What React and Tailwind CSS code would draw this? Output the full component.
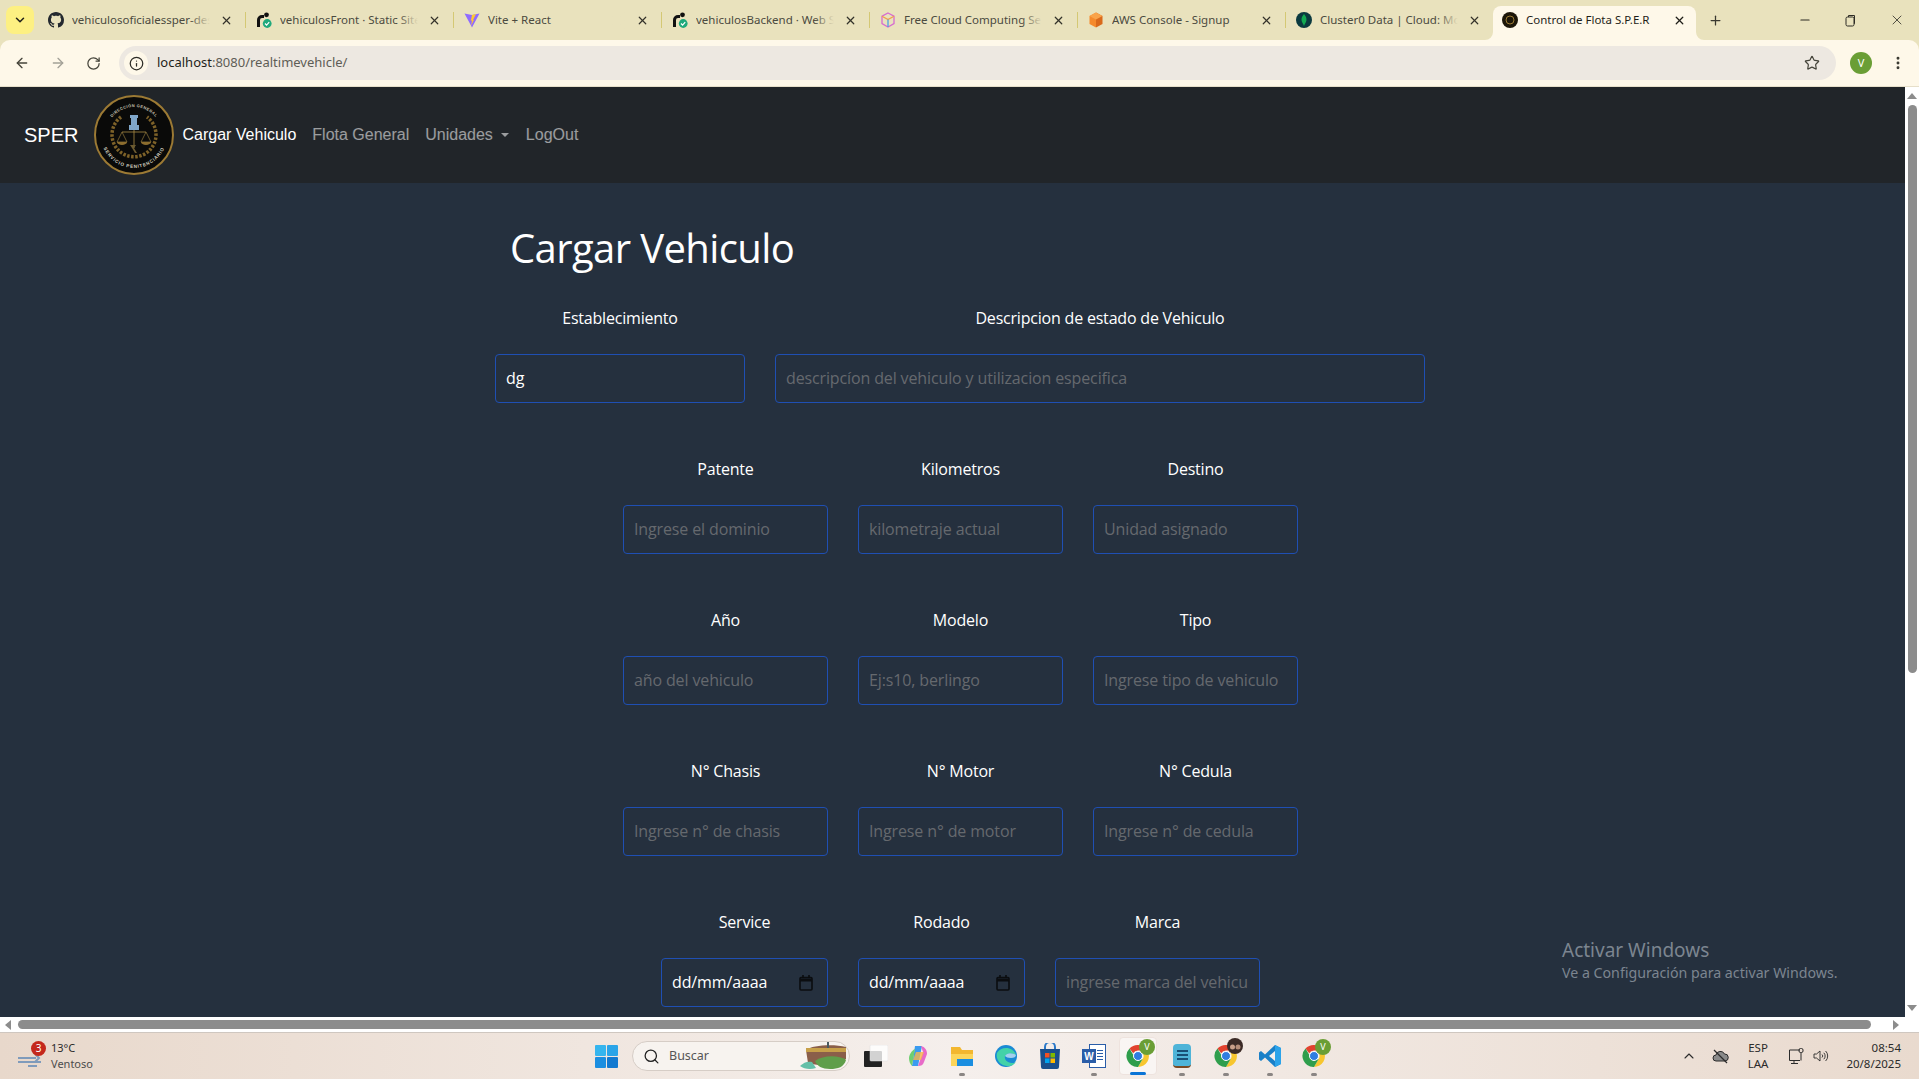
import { ArrowLeft, ArrowRight, RotateCw, Info, Star, EllipsisVertical, ChevronDown, X, Plus, Minus, Search, ChevronUp } from 'lucide-react';

const tabs = [
  { title: 'vehiculosoficialessper-des', icon: 'github' },
  { title: 'vehiculosFront · Static Site', icon: 'render' },
  { title: 'Vite + React', icon: 'vite' },
  { title: 'vehiculosBackend · Web Se', icon: 'render' },
  { title: 'Free Cloud Computing Se', icon: 'cube' },
  { title: 'AWS Console - Signup', icon: 'aws' },
  { title: 'Cluster0 Data | Cloud: Mo', icon: 'mongo' },
];

function Favicon({ type }) {
  if (type === 'github') {
    return (
      <svg width="16" height="16" viewBox="0 0 16 16" fill="#24292f">
        <path d="M8 0C3.58 0 0 3.58 0 8c0 3.54 2.29 6.53 5.47 7.59.4.07.55-.17.55-.38 0-.19-.01-.82-.01-1.49-2.01.37-2.53-.49-2.69-.94-.09-.23-.48-.94-.82-1.13-.28-.15-.68-.52-.01-.53.63-.01 1.08.58 1.23.82.72 1.21 1.87.87 2.33.66.07-.52.28-.87.51-1.07-1.78-.2-3.64-.89-3.64-3.95 0-.87.31-1.59.82-2.15-.08-.2-.36-1.02.08-2.12 0 0 .67-.21 2.2.82.64-.18 1.32-.27 2-.27s1.36.09 2 .27c1.53-1.04 2.2-.82 2.2-.82.44 1.1.16 1.92.08 2.12.51.56.82 1.27.82 2.15 0 3.07-1.87 3.75-3.65 3.95.29.25.54.73.54 1.48 0 1.07-.01 1.93-.01 2.2 0 .21.15.46.55.38A8.01 8.01 0 0 0 16 8c0-4.42-3.58-8-8-8z" />
      </svg>
    );
  }
  if (type === 'render') {
    return (
      <svg width="16" height="16" viewBox="0 0 16 16">
        <path d="M1 15V8a5 5 0 0 1 5-5h2v3H6a2 2 0 0 0-2 2v7z" fill="#111" />
        <circle cx="10.5" cy="2.8" r="2.4" fill="#111" />
        <circle cx="11.2" cy="11.5" r="4.4" fill="#1fa97c" />
        <path d="M9 11.5l1.6 1.6 2.6-3" fill="none" stroke="#fff" strokeWidth="1.2" />
      </svg>
    );
  }
  if (type === 'vite') {
    return (
      <svg width="16" height="16" viewBox="0 0 16 16">
        <path d="M0.5 1.5L8 3l7.5-1.5L8 15.5z" fill="#8f6bff" />
        <path d="M8 3l4-1-3 6 1-.3L7 14l1-5.5-1.2.3z" fill="#ffc82e" />
      </svg>
    );
  }
  if (type === 'cube') {
    return (
      <svg width="16" height="16" viewBox="0 0 16 16" fill="none" strokeWidth="1.3">
        <path d="M8 1l6 3.2v7.4L8 15l-6-3.4V4.2z" stroke="#d66bd0" />
        <path d="M2 4.2L8 7.6l6-3.4" stroke="#f0a04b" />
        <path d="M8 7.6V15" stroke="#4aa3e0" />
      </svg>
    );
  }
  if (type === 'aws') {
    return (
      <svg width="16" height="16" viewBox="0 0 16 16">
        <path d="M8 0.5l6.5 3.5v8L8 15.5z" fill="#d9691b" />
        <path d="M8 0.5L1.5 4v8L8 15.5z" fill="#f58a2c" />
        <path d="M8 0.5l6.5 3.5L8 7.5 1.5 4z" fill="#f9a34a" />
      </svg>
    );
  }
  if (type === 'mongo') {
    return (
      <svg width="16" height="16" viewBox="0 0 16 16">
        <circle cx="8" cy="8" r="8" fill="#0b3a3f" />
        <path d="M8 2c2 2.4 2.8 4.4 2.4 6.4C10.1 10 9 11.3 8 14c-1-2.7-2.1-4-2.4-5.6C5.2 6.4 6 4.4 8 2z" fill="#13aa52" />
      </svg>
    );
  }
  return null;
}

function Tab({ title, icon, last }) {
  return (
    <div className="w-[208px] h-[28px] flex items-center pl-[10px] relative">
      <div className="w-4 h-4 shrink-0 mr-[8px]"><Favicon type={icon} /></div>
      <div className="flex-1 overflow-hidden whitespace-nowrap text-[11.5px] text-[#4b4a3f] relative">
        {title}
        <div className="absolute right-0 top-0 bottom-0 w-5 bg-gradient-to-r from-transparent to-[#e9e2bd]" />
      </div>
      <X size={13} strokeWidth={2.2} className="text-[#33322a] ml-[10px] mr-[13px] shrink-0" />
      {!last && <div className="absolute right-0 top-[6px] w-px h-4 bg-[#d4c874]" />}
    </div>
  );
}

function BrowserBar() {
  return (
    <div className="shrink-0 font-['Noto_Sans',sans-serif] bg-[#e9e2bd]">
      <div className="h-10 flex">
        <div className="w-[28px] h-[28px] mt-[6px] ml-[6px] mr-[3px] rounded-lg bg-[#fdf082] flex items-center justify-center">
          <ChevronDown size={14} strokeWidth={2.6} className="text-[#22221c]" />
        </div>
        <div className="flex mt-[6px] h-[28px] ml-[1px]">
          {tabs.map((t, i) => <Tab key={t.title} {...t} last={i === tabs.length - 1} />)}
        </div>
        <div className="relative w-[203px] h-[34px] mt-[6px] bg-[#fef8e9] rounded-t-lg flex items-center pl-[9px] pr-[10px] pb-[6px] -ml-[1px]">
          <svg width="8" height="8" viewBox="0 0 8 8" className="absolute -left-[8px] bottom-0">
            <path d="M8 0v8H0a8 8 0 0 0 8-8z" fill="#fef8e9" />
          </svg>
          <svg width="8" height="8" viewBox="0 0 8 8" className="absolute -right-[8px] bottom-0">
            <path d="M0 0v8h8a8 8 0 0 1-8-8z" fill="#fef8e9" />
          </svg>
          <svg width="16" height="16" viewBox="0 0 16 16" className="shrink-0 mr-[8px]">
            <circle cx="8" cy="8" r="8" fill="#1c1608" />
            <circle cx="8" cy="8" r="4" fill="none" stroke="#9a7b35" strokeWidth="1" />
          </svg>
          <span className="flex-1 text-[11.5px] text-[#1f1e18] whitespace-nowrap overflow-hidden">Control de Flota S.P.E.R</span>
          <X size={13} strokeWidth={2.4} className="text-[#1f1e18] shrink-0" />
        </div>
        <div className="flex items-center ml-[12px]">
          <Plus size={15} strokeWidth={2} className="text-[#3a3930]" />
        </div>
        <div className="flex-1" />
        <div className="flex items-center text-[#2c2b24]">
          <Minus size={14} className="mr-[32px]" />
          <svg width="13" height="13" viewBox="0 0 13 13" fill="none" stroke="currentColor" strokeWidth="1" className="mr-[32px]">
            <rect x="2" y="3" width="8" height="9" rx="1.5" />
            <path d="M4.5 3V1.5h6V9.5H10" />
          </svg>
          <X size={16} strokeWidth={1.2} className="mr-[14px]" />
        </div>
      </div>
      <div className="h-[47px] bg-[#fef8e9] rounded-t-[10px] flex items-center pl-[14px] pr-[14px] border-b border-[#e6dfca]">
        <ArrowLeft size={16} strokeWidth={2} className="text-[#45443a] mr-[20px]" />
        <ArrowRight size={16} strokeWidth={2} className="text-[#a3a197] mr-[20px]" />
        <RotateCw size={15} strokeWidth={2} className="text-[#45443a] mr-[18px]" />
        <div className="flex-1 h-[34px] rounded-full bg-[#ede8e1] flex items-center pl-[5px] pr-[16px]">
          <div className="w-6 h-6 rounded-full bg-[#fef8e9] flex items-center justify-center mr-[9px]">
            <Info size={15} strokeWidth={2} className="text-[#2d2c26]" />
          </div>
          <span className="text-[13px] text-[#1f1f1a]">localhost<span className="text-[#5e5d56]">:8080/realtimevehicle/</span></span>
          <div className="flex-1" />
          <Star size={16} strokeWidth={1.8} className="text-[#45443a]" />
        </div>
        <div className="ml-[14px] w-[22px] h-[22px] rounded-full bg-[#6a9e35] text-white text-[11px] flex items-center justify-center">V</div>
        <EllipsisVertical size={16} strokeWidth={2.4} className="text-[#3a3930] ml-[18px] -mr-[1px]" />
      </div>
    </div>
  );
}

function Logo() {
  return (
    <svg width="80" height="80" viewBox="0 0 80 80" className="shrink-0">
      <defs>
        <path id="logoTop" d="M12 40a28 28 0 0 1 56 0" />
        <path id="logoBottom" d="M7 40a33 33 0 0 0 66 0" />
      </defs>
      <circle cx="40" cy="40" r="39" fill="#0a0a09" stroke="#9c7a34" strokeWidth="2" />
      <text fontSize="4" fill="#c9c4b2" fontFamily="Liberation Sans, sans-serif" fontWeight="700" letterSpacing="0.4">
        <textPath href="#logoTop" startOffset="50%" textAnchor="middle">DIRECCIÓN GENERAL</textPath>
      </text>
      <text fontSize="4.6" fill="#d8d4c4" fontFamily="Liberation Sans, sans-serif" fontWeight="700" letterSpacing="0.8">
        <textPath href="#logoBottom" startOffset="50%" textAnchor="middle">SERVICIO PENITENCIARIO</textPath>
      </text>
      <path d="M27 22A22 22 0 1 0 53 22" fill="none" stroke="#7d6128" strokeWidth="3.5" strokeDasharray="2.5 1.5" />
      <path d="M36 20h8v3h-1v7h2v5H35v-5h2v-7h-1z" fill="#7fa6c9" />
      <path d="M40 35v18M28 37h24" stroke="#a88a45" strokeWidth="0.8" />
      <path d="M28 37l-5 10h10zM52 37l-5 10h10z" fill="none" stroke="#a88a45" strokeWidth="0.6" />
      <path d="M23 47a5 3 0 0 0 10 0zM47 47a5 3 0 0 0 10 0z" fill="#8c6d2e" />
      <path d="M36 50h6l-2 3 3 5h-2l-3-5z" fill="#6b5a30" />
    </svg>
  );
}

function Navbar() {
  return (
    <nav className="h-[96px] bg-[#212529] flex items-center pl-[24px] font-['Liberation_Sans',sans-serif] text-base text-white/55 shrink-0">
      <span className="text-xl text-white mr-[16px]">SPER</span>
      <Logo />
      <span className="text-white ml-[8px]">Cargar Vehiculo</span>
      <span className="ml-4">Flota General</span>
      <span className="ml-4 flex items-center">
        Unidades
        <span className="ml-[8px] w-0 h-0 border-x-[4px] border-x-transparent border-t-[4px] border-t-white/55" />
      </span>
      <span className="ml-[17px]">LogOut</span>
    </nav>
  );
}

function Field({ label, placeholder, value, width = 'w-[205px]', date }) {
  return (
    <div className={`${width} flex flex-col items-center`}>
      <label className="h-[22px] leading-[22px] text-base font-medium text-white mb-[25px] tracking-[-0.2px]">{label}</label>
      <div className="w-full h-[49px] rounded border border-[#1f4fb3] flex items-center px-[10px] pb-[2px] text-base whitespace-nowrap tracking-[-0.13px]">
        {date ? (
          <>
            <span className="flex-1 text-white">dd/mm/aaaa</span>
            <svg width="14" height="16" viewBox="0 0 14 16" fill="none" stroke="#0b0d10" strokeWidth="1.6" className="mr-[4px] mt-[2px]">
              <rect x="1" y="2.5" width="12" height="12.5" rx="1" />
              <path d="M1 5h12" strokeWidth="3" />
              <path d="M4 0v3M10 0v3" />
            </svg>
          </>
        ) : value ? (
          <span className="text-white">{value}</span>
        ) : (
          <span className="block flex-1 min-w-0 overflow-hidden text-[#65696e]">{placeholder}</span>
        )}
      </div>
    </div>
  );
}

function Form() {
  return (
    <div className="w-[1921px] shrink-0 font-['Open_Sans',sans-serif]">
      <h1 className="text-[40px] leading-[48px] text-white ml-[510px] mt-[41px] mb-[35px] tracking-[-0.6px]">Cargar Vehiculo</h1>
      <div className="flex justify-center gap-[30px] pr-[1px]">
        <Field label="Establecimiento" value="dg" width="w-[250px]" />
        <Field label="Descripcion de estado de Vehiculo" placeholder="descripcíon del vehiculo y utilizacion especifica" width="w-[650px]" />
      </div>
      <div className="flex justify-center gap-[30px] mt-[55px]">
        <Field label="Patente" placeholder="Ingrese el dominio" />
        <Field label="Kilometros" placeholder="kilometraje actual" />
        <Field label="Destino" placeholder="Unidad asignado" />
      </div>
      <div className="flex justify-center gap-[30px] mt-[55px]">
        <Field label="Año" placeholder="año del vehiculo" />
        <Field label="Modelo" placeholder="Ej:s10, berlingo" />
        <Field label="Tipo" placeholder="Ingrese tipo de vehiculo" />
      </div>
      <div className="flex justify-center gap-[30px] mt-[55px]">
        <Field label="N° Chasis" placeholder="Ingrese n° de chasis" />
        <Field label="N° Motor" placeholder="Ingrese n° de motor" />
        <Field label="N° Cedula" placeholder="Ingrese n° de cedula" />
      </div>
      <div className="flex justify-center gap-[30px] mt-[55px]">
        <Field label="Service" date width="w-[167px]" />
        <Field label="Rodado" date width="w-[167px]" />
        <Field label="Marca" placeholder="ingrese marca del vehiculo" />
      </div>
    </div>
  );
}

function ChromeIcon({ badge }) {
  return (
    <div className="relative w-[24px] h-[24px]">
      <svg width="24" height="24" viewBox="0 0 24 24">
        <path d="M12 1a11 11 0 0 1 9.5 5.5H12a5.5 5.5 0 0 0-4.8 2.8L3.5 4.5A11 11 0 0 1 12 1z" fill="#e2432f" />
        <path d="M21.5 6.5A11 11 0 0 1 12 23l4.8-8.3A5.5 5.5 0 0 0 16.7 9z" fill="#f7c62f" />
        <path d="M12 23A11 11 0 0 1 3.5 4.5l4.7 8a5.5 5.5 0 0 0 8.6 2.2z" fill="#2f9e4c" />
        <circle cx="12" cy="12" r="4.5" fill="#2f7de1" stroke="#fff" strokeWidth="1" />
      </svg>
      {badge && <div className="absolute -top-[5px] -right-[5px] w-[16px] h-[16px] rounded-full bg-[#6a9e35] text-white text-[9px] flex items-center justify-center">V</div>}
    </div>
  );
}

function Dot() {
  return <div className="absolute bottom-[3px] left-1/2 -ml-[3px] w-[6px] h-[3px] rounded-full bg-[#8a8583]" />;
}

function Taskbar() {
  return (
    <div className="relative h-[47px] shrink-0 flex items-center font-['Noto_Sans',sans-serif] bg-gradient-to-r from-[#e8d8cb] via-[#f5efec] to-[#e9dace] border-t border-[#cfc7c0]">
      <div className="w-[595px] shrink-0 flex items-center pl-[18px]">
        <div className="relative w-[24px] h-[24px] mr-[7px]">
          <svg width="24" height="24" viewBox="0 0 24 24" fill="none" stroke="#7f9bbb" strokeWidth="2" className="mt-[3px]">
            <path d="M0 11h18M0 15h23M10 19h9M17 7l4 4-4 4" />
          </svg>
          <div className="absolute -top-[3px] left-[13px] w-[15px] h-[15px] rounded-full bg-[#c4281c] text-white text-[10px] flex items-center justify-center">3</div>
        </div>
        <div className="text-[11px] leading-[16px] text-[#2b2b2b] ml-[2px]">
          <div>13°C</div>
          <div className="text-[#4c4c4c]">Ventoso</div>
        </div>
      </div>
      <svg width="23" height="23" viewBox="0 0 23 23" className="shrink-0">
        <rect x="0" y="0" width="11" height="11" rx="1" fill="#35b5ee" />
        <rect x="12" y="0" width="11" height="11" rx="1" fill="#2aa4e8" />
        <rect x="0" y="12" width="11" height="11" rx="1" fill="#1b8ee0" />
        <rect x="12" y="12" width="11" height="11" rx="1" fill="#1279d0" />
      </svg>
      <div className="ml-[14px] w-[218px] h-[30px] rounded-full bg-[#f7f3ef] border border-[#d6cdc6] flex items-center pl-[10px] pr-[1px]">
        <Search size={17} strokeWidth={1.8} className="text-[#222]" />
        <span className="ml-[9px] text-[12.5px] text-[#555]">Buscar</span>
        <div className="flex-1" />
        <svg width="48" height="28" viewBox="0 0 48 28">
          <path d="M6 8c6-5 28-6 40-3v12c-6 6-26 8-38 4z" fill="#8a5f4a" />
          <path d="M6 6h40v4H6z" fill="#c7a04a" />
          <path d="M27 0h2v6h-2z" fill="#4a5a5f" />
          <path d="M0 24c4-4 8-5 12-4l4 6c-6 2-12 1-16-2z" fill="#63c0a8" />
          <path d="M15 19c8-6 24-6 31-1-2 7-8 9-16 9s-13-3-15-8z" fill="#5f9e4a" />
        </svg>
      </div>
      <div className="ml-[12px] flex items-center relative h-full">
        <div className="w-[27px] h-full flex items-center justify-center">
          <svg width="24" height="22" viewBox="0 0 24 22">
            <rect x="0" y="6" width="18" height="16" rx="1" fill="#222" />
            <rect x="6" y="0" width="18" height="16" rx="1" fill="#fff" fillOpacity="0.8" stroke="#ddd" strokeWidth="0.5" />
          </svg>
        </div>
        <div className="w-[44px] ml-[7px] h-full flex items-center justify-center">
          <svg width="24" height="24" viewBox="0 0 24 24">
            <path d="M9 2h7l-4 20H6z" fill="#3b9bf0" />
            <path d="M15 2c4 1 6 4 6 8l-3 8c-1 3-3 4-6 4l5-14z" fill="#e86bc8" />
            <path d="M3 14c0-3 3-8 6-9l-3 17c-2-2-3-5-3-8z" fill="#6fcf6f" />
            <path d="M10 8h8l-3 8H7z" fill="#f9b64a" opacity="0.8" />
          </svg>
        </div>
        <div className="w-[44px] h-full flex items-center justify-center relative">
          <svg width="22" height="24" viewBox="0 0 22 24">
            <path d="M0 3h9l2 3h11v16H0z" fill="#f3b72f" />
            <rect x="0" y="10" width="22" height="12" fill="#fcd55a" />
            <rect x="6" y="15" width="16" height="7" fill="#1b8ee0" />
          </svg>
          <Dot />
        </div>
        <div className="w-[44px] h-full flex items-center justify-center relative">
          <svg width="24" height="24" viewBox="0 0 24 24">
            <circle cx="12" cy="12" r="11" fill="#1a8ad4" />
            <path d="M3 9c4-7 16-7 19 2-3-2-9-3-11 1-1 3 2 7 7 7 1 0 3 0 4-1-4 6-13 5-17 0-2-3-3-6-2-9z" fill="#43d2a8" />
            <path d="M11 12c2-4 8-3 11-1 0 2-2 3-5 3s-5-1-6-2z" fill="#fff" opacity="0.6" />
          </svg>
        </div>
        <div className="w-[44px] h-full flex items-center justify-center relative">
          <svg width="22" height="26" viewBox="0 0 22 26">
            <path d="M6 6V4a5 5 0 0 1 10 0v2" fill="none" stroke="#2a78c8" strokeWidth="2" />
            <path d="M1 6h20l-1 18a2 2 0 0 1-2 2H4a2 2 0 0 1-2-2z" fill="#1a4f8c" />
            <rect x="6" y="10" width="4.5" height="4.5" fill="#f25022" />
            <rect x="11.5" y="10" width="4.5" height="4.5" fill="#7fba00" />
            <rect x="6" y="15.5" width="4.5" height="4.5" fill="#00a4ef" />
            <rect x="11.5" y="15.5" width="4.5" height="4.5" fill="#ffb900" />
          </svg>
        </div>
        <div className="w-[44px] h-full flex items-center justify-center relative">
          <div className="relative w-[24px] h-[24px]">
            <div className="absolute right-0 top-0 w-[17px] h-[24px] bg-white border border-[#2a5da8] flex flex-col gap-[2px] items-end pt-[5px] pr-[2px]">
              <div className="w-[6px] h-px bg-[#2a5da8]" />
              <div className="w-[6px] h-px bg-[#2a5da8]" />
              <div className="w-[6px] h-px bg-[#2a5da8]" />
              <div className="w-[6px] h-px bg-[#2a5da8]" />
            </div>
            <div className="absolute left-0 top-[5px] w-[14px] h-[14px] bg-[#2a5da8] text-white text-[10px] font-bold flex items-center justify-center font-['Liberation_Sans',sans-serif]">W</div>
          </div>
          <Dot />
        </div>
        <div className="w-[44px] h-full flex items-center justify-center relative">
          <div className="absolute left-[3px] top-[4px] w-[38px] h-[38px] rounded bg-white/50 border border-[#eee3de]" />
          <ChromeIcon badge />
          <div className="absolute bottom-[4px] left-1/2 -ml-[8px] w-[16px] h-[3px] rounded-full bg-[#0a74d6]" />
        </div>
        <div className="w-[44px] h-full flex items-center justify-center relative">
          <div className="w-[18px] h-[24px] rounded-sm bg-[#4fb4d8] flex flex-col justify-center items-center gap-[2px] border-b-2 border-[#7a4a24]">
            <div className="w-[11px] h-[2px] bg-[#184f75]" />
            <div className="w-[11px] h-[2px] bg-[#184f75]" />
            <div className="w-[11px] h-[2px] bg-[#184f75]" />
          </div>
          <Dot />
        </div>
        <div className="w-[44px] h-full flex items-center justify-center relative">
          <ChromeIcon />
          <svg width="16" height="16" viewBox="0 0 16 16" className="absolute top-[5px] left-[23px]">
            <circle cx="8" cy="8" r="8" fill="#3a2a26" />
            <circle cx="5.5" cy="9" r="2.5" fill="#c9a08a" />
            <circle cx="11" cy="9" r="2.5" fill="#b58d78" />
          </svg>
          <Dot />
        </div>
        <div className="w-[44px] h-full flex items-center justify-center relative">
          <svg width="24" height="24" viewBox="0 0 24 24">
            <path d="M17 1l6 3v16l-6 3-10-9.5L3 17l-2-1.5V8.5L3 7l4 3.5z" fill="#1a80c8" />
            <path d="M17 1l6 3v16l-6 3z" fill="#2ba3ea" />
            <path d="M17 7l-6 5 6 5z" fill="#f5efec" />
          </svg>
          <Dot />
        </div>
        <div className="w-[44px] h-full flex items-center justify-center relative">
          <ChromeIcon badge />
          <Dot />
        </div>
      </div>
      <div className="flex-1" />
      <div className="flex items-center text-[#2b2b2b] text-[11.5px] pr-[18px]">
        <ChevronUp size={16} strokeWidth={1.6} className="mr-[15px]" />
        <svg width="17" height="17" viewBox="0 0 17 17" className="mr-[19px]">
          <path d="M4 13a3 3 0 0 1 0-6 4.5 4.5 0 0 1 8.5-1A3.5 3.5 0 0 1 13 13z" fill="#8a8a8a" stroke="#2b2b2b" strokeWidth="1" />
          <path d="M2 2l13 13" stroke="#2b2b2b" strokeWidth="1.3" />
        </svg>
        <div className="text-center leading-[16px] mr-[20px]">
          <div>ESP</div>
          <div>LAA</div>
        </div>
        <svg width="17" height="17" viewBox="0 0 17 17" fill="none" stroke="#2b2b2b" strokeWidth="1" className="mr-[8px]">
          <path d="M12 2H1.5v10.5H12M6 12.5V15M3 15.5h7" />
          <rect x="11" y="0.5" width="4" height="4" rx="1.5" />
          <path d="M13 4.5v8" />
        </svg>
        <svg width="16" height="16" viewBox="0 0 16 16" fill="none" stroke="#2b2b2b" strokeWidth="0.9" className="mr-[17px]">
          <path d="M1 6v4h2.5L7 13V3L3.5 6z" />
          <path d="M9 6.500a2 2 0 0 1 0 3M10.800 4.800a4.500 4.500 0 0 1 0 6.400M12.600 3a7 7 0 0 1 0 10" />
        </svg>
        <div className="text-right leading-[16px]">
          <div>08:54</div>
          <div>20/8/2025</div>
        </div>
      </div>
    </div>
  );
}

export default function App() {
  return (
    <div className="w-screen h-screen overflow-hidden flex flex-col bg-white">
      <BrowserBar />
      <div className="flex-1 min-h-0 flex">
        <div className="flex-1 min-w-0 flex flex-col">
          <div className="relative flex-1 min-h-0 overflow-hidden flex flex-col bg-[#25303e]">
            <Navbar />
            <div className="flex-1 min-h-0"><Form /></div>
            <div className="absolute left-[1562px] top-[850px] font-['Noto_Sans',sans-serif] text-[#7c8590]">
              <div className="text-[19px] leading-[26px]">Activar Windows</div>
              <div className="text-[14.2px] leading-5">Ve a Configuración para activar Windows.</div>
            </div>
          </div>
          <div className="h-[15px] shrink-0 bg-white flex items-center pl-[5px] pr-[6px]">
            <div className="w-0 h-0 border-y-[5px] border-y-transparent border-r-[6px] border-r-[#8c8c8c]" />
            <div className="ml-[7px] flex-1 h-[9px] rounded-full bg-[#8c8c8c]" />
            <div className="ml-[22px] w-0 h-0 border-y-[5px] border-y-transparent border-l-[6px] border-l-[#8c8c8c]" />
          </div>
        </div>
        <div className="w-[14px] shrink-0 bg-white flex flex-col items-center pt-[6px]">
          <div className="w-0 h-0 border-x-[5px] border-x-transparent border-b-[6px] border-b-[#8c8c8c]" />
          <div className="mt-[6px] w-[9px] h-[568px] rounded-full bg-[#8c8c8c]" />
          <div className="flex-1" />
          <div className="mb-[21px] w-0 h-0 border-x-[5px] border-x-transparent border-t-[6px] border-t-[#8c8c8c]" />
        </div>
      </div>
      <Taskbar />
    </div>
  );
}
